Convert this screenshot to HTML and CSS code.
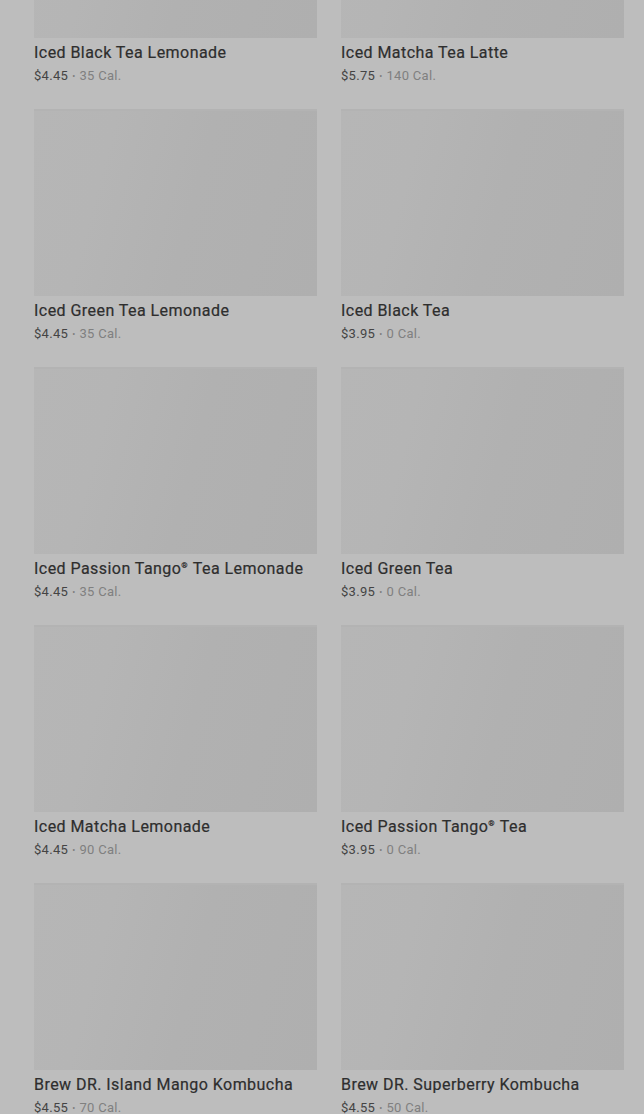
FILE: index.html
```html
<!DOCTYPE html>
<html lang="en">
<head>
<meta charset="utf-8">
<title>Menu</title>
<link rel="stylesheet" href="styles.css">
</head>
<body>
<main class="grid">
  <article class="card"><div class="thumb"></div><h3 class="name">Iced Black Tea Lemonade</h3><p class="meta"><span class="price">$4.45</span><span class="dot">•</span><span class="cal">35 Cal.</span></p></article>
  <article class="card"><div class="thumb"></div><h3 class="name">Iced Matcha Tea Latte</h3><p class="meta"><span class="price">$5.75</span><span class="dot">•</span><span class="cal">140 Cal.</span></p></article>
  <article class="card"><div class="thumb"></div><h3 class="name">Iced Green Tea Lemonade</h3><p class="meta"><span class="price">$4.45</span><span class="dot">•</span><span class="cal">35 Cal.</span></p></article>
  <article class="card"><div class="thumb"></div><h3 class="name">Iced Black Tea</h3><p class="meta"><span class="price">$3.95</span><span class="dot">•</span><span class="cal">0 Cal.</span></p></article>
  <article class="card"><div class="thumb"></div><h3 class="name">Iced Passion Tango<sup class="reg">®</sup> Tea Lemonade</h3><p class="meta"><span class="price">$4.45</span><span class="dot">•</span><span class="cal">35 Cal.</span></p></article>
  <article class="card"><div class="thumb"></div><h3 class="name">Iced Green Tea</h3><p class="meta"><span class="price">$3.95</span><span class="dot">•</span><span class="cal">0 Cal.</span></p></article>
  <article class="card"><div class="thumb"></div><h3 class="name">Iced Matcha Lemonade</h3><p class="meta"><span class="price">$4.45</span><span class="dot">•</span><span class="cal">90 Cal.</span></p></article>
  <article class="card"><div class="thumb"></div><h3 class="name">Iced Passion Tango<sup class="reg">®</sup> Tea</h3><p class="meta"><span class="price">$3.95</span><span class="dot">•</span><span class="cal">0 Cal.</span></p></article>
  <article class="card"><div class="thumb"></div><h3 class="name">Brew DR. Island Mango Kombucha</h3><p class="meta"><span class="price">$4.55</span><span class="dot">•</span><span class="cal">70 Cal.</span></p></article>
  <article class="card"><div class="thumb"></div><h3 class="name">Brew DR. Superberry Kombucha</h3><p class="meta"><span class="price">$4.55</span><span class="dot">•</span><span class="cal">50 Cal.</span></p></article>
</main>
</body>
</html>
```
FILE: styles.css
```css
html, body {
  margin: 0;
  padding: 0;
  background: #bdbdbd;
  overflow: hidden;
}
body {
  font-family: Roboto, "Liberation Sans", sans-serif;
  color: #383838;
}
.grid {
  display: grid;
  grid-template-columns: 283px 283px;
  column-gap: 24px;
  row-gap: 22px;
  padding: 0 20px 0 34px;
  margin-top: -149px;
}
.card {
  display: flex;
  flex-direction: column;
}
.thumb {
  height: 187px;
  background: linear-gradient(105deg, #b6b6b6 0%, #b5b5b5 25%, #b1b1b1 55%, #afafaf 100%);
  border-top: 2px solid #b3b3b3;
  box-sizing: border-box;
}
.name {
  margin: 3px 0 0;
  font-size: 16px;
  line-height: 24px;
  font-weight: 400;
  color: #2e2e2e;
  letter-spacing: 0.45px;
  white-space: nowrap;
  -webkit-text-stroke: 0.2px #2e2e2e;
}
.reg {
  font-size: 8px;
  line-height: 0;
  vertical-align: 6px;
  letter-spacing: 0;
  margin: 0 1px 0 0;
}
.meta {
  margin: 0;
  height: 22px;
  display: flex;
  align-items: center;
  font-size: 13px;
  line-height: 22px;
  letter-spacing: 0.3px;
  color: #808080;
}
.price {
  color: #444444;
}
.dot {
  font-size: 9px;
  margin: 0 4px;
  color: #7c7c7c;
}
```
